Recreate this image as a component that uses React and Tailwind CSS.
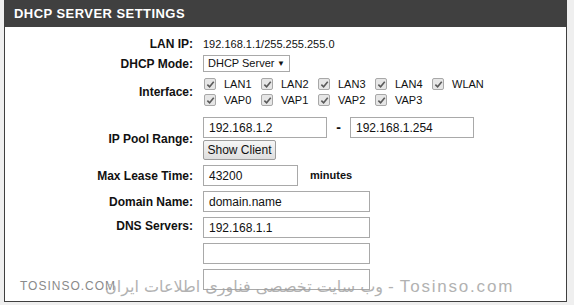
import React from "react";

const font = { fontFamily: '"Liberation Sans", Arial, sans-serif' };

const Check = () => (
  <span className="inline-flex items-center justify-center w-[12px] h-[12px] border border-[#a8a8a8] bg-[#e6e6e6] rounded-[2px]">
    <svg width="9" height="9" viewBox="0 0 10 10">
      <path d="M1.5 5.2 L4 7.6 L8.6 2" fill="none" stroke="#5a5a5a" strokeWidth="1.8" />
    </svg>
  </span>
);

const Row = ({ label, className = "", children }) => (
  <div className={`flex ${className}`}>
    <div className="w-[188px] shrink-0 flex items-center justify-end text-[12px] font-bold text-[#111]">
      {label}
    </div>
    <div className="ml-[10px]">{children}</div>
  </div>
);

const Input = ({ value, w }) => (
  <div
    className={`${w} h-[21px] border border-[#a9a9a9] bg-white flex items-center pl-[5px] text-[12px] text-[#111]`}
  >
    {value}
  </div>
);

const ifaces = [
  ["LAN1", "LAN2", "LAN3", "LAN4", "WLAN"],
  ["VAP0", "VAP1", "VAP2", "VAP3"],
];

export default function App() {
  return (
    <div className="w-[574px] h-[305px] bg-[#efefef] relative overflow-hidden" style={font}>
      <div className="ml-[4px] w-[563px] h-[302px] border-x border-b border-[#3f3f3f] bg-white">
        <div className="h-[27px] bg-[#404040] flex items-center pl-[9px] text-white text-[13px] font-bold tracking-[0.45px]">
          DHCP SERVER SETTINGS
        </div>

        <Row label="LAN IP:" className="mt-[9px] h-[16px]">
          <div className="h-[16px] flex items-center text-[11px] text-[#111]">
            192.168.1.1/255.255.255.0
          </div>
        </Row>

        <Row label="DHCP Mode:" className="mt-[3px] h-[17px]">
          <div className="w-[87px] h-[17px] border border-[#a9a9a9] bg-white flex items-center justify-between pl-[4px] pr-[4px] text-[11px] text-[#111]">
            <span>DHCP Server</span>
            <span className="text-[8px]">▼</span>
          </div>
        </Row>

        <Row label="Interface:" className="mt-[4px]">
          <div className="flex flex-col">
            {ifaces.map((row, i) => (
              <div key={i} className="flex h-[16px] items-center">
                {row.map((name) => (
                  <div key={name} className="w-[57px] flex items-center pl-[1px]">
                    <Check />
                    <span className="ml-[8px] text-[11px] text-[#111]">{name}</span>
                  </div>
                ))}
              </div>
            ))}
          </div>
        </Row>

        <Row label="IP Pool Range:" className="mt-[9px]">
          <div className="flex flex-col">
            <div className="flex items-center">
              <Input value="192.168.1.2" w="w-[124px]" />
              <span className="w-[23px] text-center text-[14px] font-bold text-[#111]">-</span>
              <Input value="192.168.1.254" w="w-[124px]" />
            </div>
            <button className="mt-[2px] w-[73px] h-[20px] border border-[#9c9c9c] rounded-[2px] bg-gradient-to-b from-[#f6f6f6] to-[#dedede] text-[12px] text-[#111]">
              Show Client
            </button>
          </div>
        </Row>

        <Row label="Max Lease Time:" className="mt-[5px]">
          <div className="flex items-center">
            <Input value="43200" w="w-[95px]" />
            <span className="ml-[12px] text-[11px] font-bold text-[#111]">minutes</span>
          </div>
        </Row>

        <Row label="Domain Name:" className="mt-[5px]">
          <Input value="domain.name" w="w-[167px]" />
        </Row>

        <Row label="DNS Servers:" className="mt-[5px] items-start">
          <div className="flex flex-col gap-[5px]">
            <Input value="192.168.1.1" w="w-[167px]" />
            <Input value="" w="w-[167px]" />
            <Input value="" w="w-[167px]" />
          </div>
        </Row>
      </div>

      <div className="absolute left-[20px] top-[277px] text-[12px] tracking-[1px] text-[#8a8a8a]">
        TOSINSO.COM
      </div>
      <div
        className="absolute left-[105px] top-[274px] flex items-baseline text-[#a0a0a0] opacity-80"
        style={{ fontFamily: '"DejaVu Sans", "Noto Sans", sans-serif' }}
      >
        <span className="text-[16px] tracking-[0.4px]">وب سایت تخصصی فناوری اطلاعات ایران - </span>
        <span className="ml-[6px] text-[17px] tracking-[1.8px]" style={font}>Tosinso.com</span>
      </div>
    </div>
  );
}
